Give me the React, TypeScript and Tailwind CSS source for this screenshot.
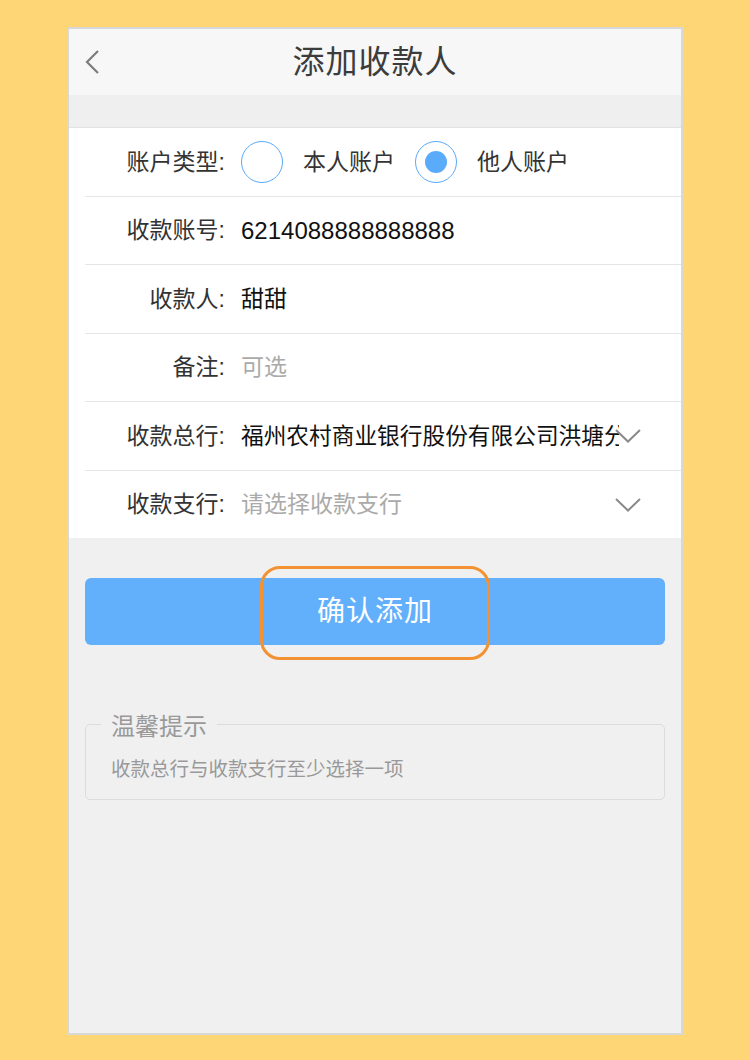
import { ReactNode } from 'react';

const cjk = "font-['Liberation_Sans','Noto_Sans_CJK_SC',sans-serif]";

function Chevron() {
  return (
    <svg width="26" height="14" viewBox="0 0 26 14" className="shrink-0 -ml-[4px]">
      <path d="M1 1 L13 12.5 L25 1" fill="none" stroke="#8a8a8a" strokeWidth="2" />
    </svg>
  );
}

function Radio({ checked }: { checked?: boolean }) {
  return (
    <span className="w-[42px] h-[42px] rounded-full border-[1.5px] border-[#5aabfa] flex items-center justify-center shrink-0">
      {checked && <span className="w-[22px] h-[22px] rounded-full bg-[#5aabfa]" />}
    </span>
  );
}

function Row({ label, children, h, first }: { label: string; children: ReactNode; h: string; first?: boolean }) {
  return (
    <div className={`flex items-center ml-[16px] ${h} ${first ? '' : 'border-t border-[#e6e6e6]'}`}>
      <span className="w-[140px] shrink-0 text-right text-[23px] text-[#333]">{label}:</span>
      <div className="ml-[16px] flex items-center flex-1 min-w-0">{children}</div>
    </div>
  );
}

export default function App() {
  return (
    <div className={`min-h-[1060px] bg-[#ffd675] pt-[27px] ${cjk}`}>
      <div className="w-[616px] h-[1008px] mx-auto border-2 border-[#d8d8d8] bg-[#f0f0f0] flex flex-col">
        <div className="h-[66px] bg-[#f7f7f7] grid grid-cols-[1fr_auto_1fr] items-center">
          <div className="pl-[15px]">
            <svg width="16" height="24" viewBox="0 0 16 24">
              <path d="M14 1 L3 12 L14 23" fill="none" stroke="#7c7c7c" strokeWidth="2.2" />
            </svg>
          </div>
          <h1 className="text-[32px] text-[#3c3c3c] tracking-[1px]">添加收款人</h1>
          <div />
        </div>
        <div className="h-[33px] bg-[#efefef] border-b border-[#e2e2e2]" />

        <div className="bg-white">
          <Row label="账户类型" h="h-[68px]" first>
            <Radio />
            <span className="ml-[20px] text-[23px] text-[#333]">本人账户</span>
            <span className="ml-[20px]">
              <Radio checked />
            </span>
            <span className="ml-[20px] text-[23px] text-[#333]">他人账户</span>
          </Row>
          <Row label="收款账号" h="h-[68px]">
            <span className="text-[24px] text-[#111]">6214088888888888</span>
          </Row>
          <Row label="收款人" h="h-[69px]">
            <span className="text-[23px] text-[#111]">甜甜</span>
          </Row>
          <Row label="备注" h="h-[68px]">
            <span className="text-[23px] text-[#aaa]">可选</span>
          </Row>
          <Row label="收款总行" h="h-[69px]">
            <span className="w-[378px] shrink-0 overflow-hidden whitespace-nowrap text-[22.7px] text-[#111]">
              福州农村商业银行股份有限公司洪塘分理处
            </span>
            <Chevron />
          </Row>
          <Row label="收款支行" h="h-[68px]">
            <span className="w-[378px] shrink-0 overflow-hidden whitespace-nowrap text-[23px] text-[#aaa]">
              请选择收款支行
            </span>
            <Chevron />
          </Row>
        </div>

        <div className="relative mt-[40px] mx-[16px] h-[67px] rounded-[6px] bg-[#62b0fb] flex items-center justify-center">
          <span className="text-[28px] text-white tracking-[1px]">确认添加</span>
          <div className="absolute left-[175px] top-[-12px] w-[230px] h-[94px] rounded-[20px] border-[3px] border-[#f39232]" />
        </div>

        <fieldset className="mt-[64px] mx-[16px] border border-[#dcdcdc] rounded-[5px] px-[25px] pt-[17px] pb-[17px]">
          <legend className="-ml-[10px] px-[10px] pt-[6px] text-[24px] leading-[24px] text-[#999]">温馨提示</legend>
          <p className="text-[19.5px] leading-[26px] text-[#999]">收款总行与收款支行至少选择一项</p>
        </fieldset>
      </div>
    </div>
  );
}
